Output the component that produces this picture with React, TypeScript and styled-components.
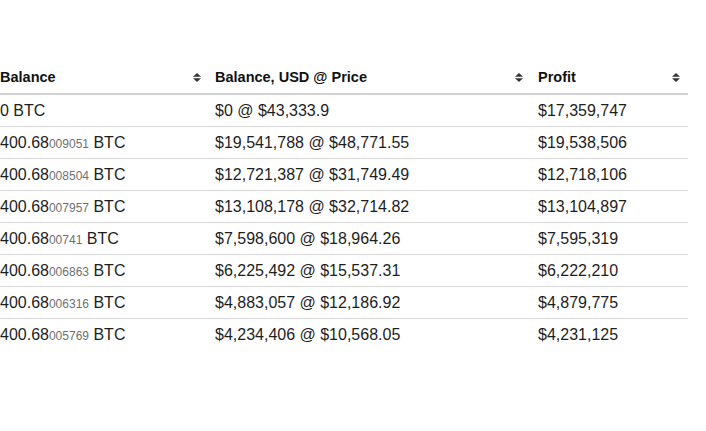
import React from "react";
import styled, { createGlobalStyle } from "styled-components";

const Global = createGlobalStyle`
  html, body { margin: 0; padding: 0; background: #fff; }
  body { font-family: "Liberation Sans", Arial, Helvetica, sans-serif; color: #1e1e1e; overflow: hidden; }
`;

const Page = styled.div`
  padding-top: 61px;
  margin-left: -10px;
  width: 698px;
`;

const Table = styled.table`
  border-collapse: collapse;
  table-layout: fixed;
  width: 698px;
`;

const Th = styled.th<{ $w: number; $pr: number }>`
  width: ${(p) => p.$w}px;
  height: 33px;
  padding: 0 ${(p) => p.$pr}px 0 10px;
  box-sizing: border-box;
  text-align: left;
  font-size: 14.5px;
  font-weight: 700;
  color: #111;
  border-bottom: 2px solid #d2d2d2;
  vertical-align: middle;
`;

const HeadInner = styled.div`
  display: flex;
  align-items: center;
  justify-content: space-between;
`;

const Tr = styled.tr`
  & + & td { border-top: 1px solid #d8d8d8; }
`;

const Td = styled.td`
  height: 31px;
  padding: 0 0 0 10px;
  font-size: 16px;
  color: #1e1e1e;
  vertical-align: middle;
  white-space: nowrap;
`;

const Small = styled.span`
  font-size: 12px;
  color: #6f6f6f;
`;

const SortIcon = () => (
  <svg width="8" height="9" viewBox="0 0 8 9" aria-hidden>
    <path d="M4 0 L8 3.8 L0 3.8 Z" fill="#333" />
    <path d="M0 5.2 L8 5.2 L4 9 Z" fill="#333" />
  </svg>
);

type Row = { big: string; small?: string; usd: string; profit: string };

const rows: Row[] = [
  { big: "0", usd: "$0 @ $43,333.9", profit: "$17,359,747" },
  { big: "400.68", small: "009051", usd: "$19,541,788 @ $48,771.55", profit: "$19,538,506" },
  { big: "400.68", small: "008504", usd: "$12,721,387 @ $31,749.49", profit: "$12,718,106" },
  { big: "400.68", small: "007957", usd: "$13,108,178 @ $32,714.82", profit: "$13,104,897" },
  { big: "400.68", small: "00741", usd: "$7,598,600 @ $18,964.26", profit: "$7,595,319" },
  { big: "400.68", small: "006863", usd: "$6,225,492 @ $15,537.31", profit: "$6,222,210" },
  { big: "400.68", small: "006316", usd: "$4,883,057 @ $12,186.92", profit: "$4,879,775" },
  { big: "400.68", small: "005769", usd: "$4,234,406 @ $10,568.05", profit: "$4,231,125" },
];

const headers = [
  { label: "Balance", w: 215, pr: 4 },
  { label: "Balance, USD @ Price", w: 323, pr: 5 },
  { label: "Profit", w: 160, pr: 8 },
];

export default function App() {
  return (
    <>
      <Global />
      <Page>
        <Table>
          <thead>
            <tr>
              {headers.map((h) => (
                <Th key={h.label} $w={h.w} $pr={h.pr}>
                  <HeadInner>
                    <span>{h.label}</span>
                    <SortIcon />
                  </HeadInner>
                </Th>
              ))}
            </tr>
          </thead>
          <tbody>
            {rows.map((r, i) => (
              <Tr key={i}>
                <Td>
                  {r.big}
                  {r.small && <Small>{r.small}</Small>} BTC
                </Td>
                <Td>{r.usd}</Td>
                <Td>{r.profit}</Td>
              </Tr>
            ))}
          </tbody>
        </Table>
      </Page>
    </>
  );
}
